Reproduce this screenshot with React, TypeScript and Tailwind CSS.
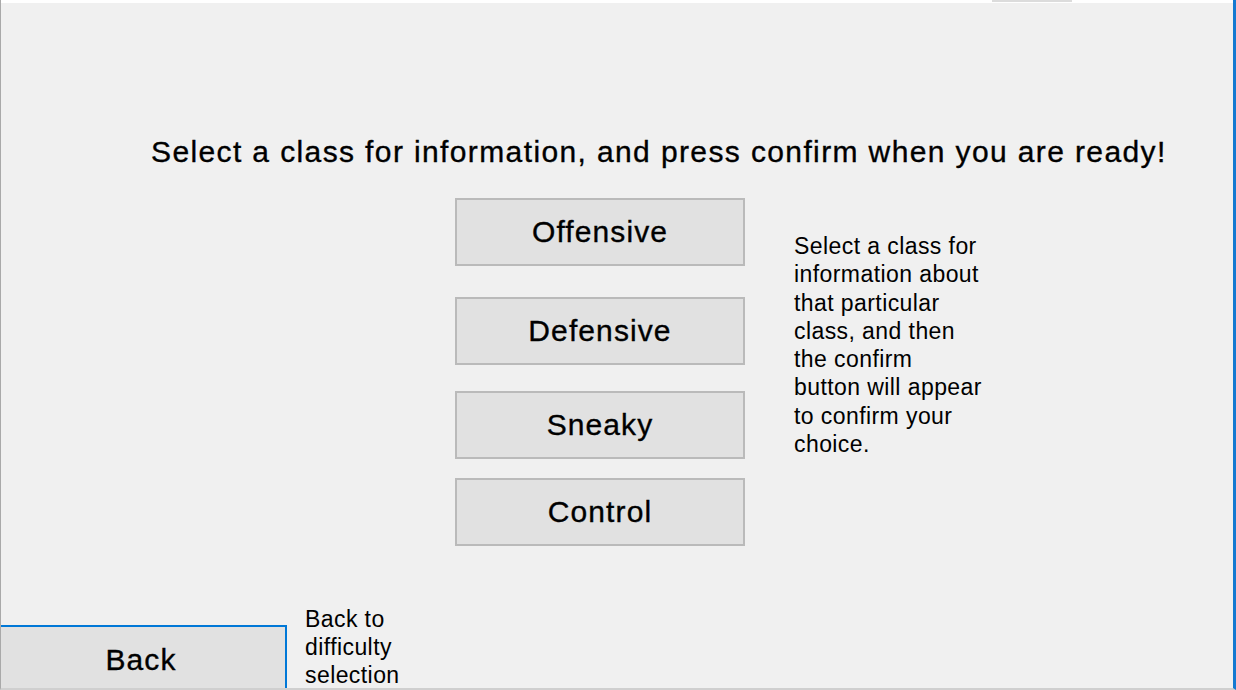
import React from "react";

const font = { fontFamily: '"Liberation Sans", Arial, sans-serif' };

function ClassButton({ label, className }: { label: string; className?: string }) {
  return (
    <button
      className={
        "w-[290px] h-[68px] bg-[#e1e1e1] border-2 border-[#bababa] flex items-center justify-center text-[30px] leading-none tracking-[1.1px] text-black [-webkit-text-stroke:0.35px_#000] " +
        (className ?? "")
      }
    >
      {label}
    </button>
  );
}

export default function App() {
  return (
    <div
      className="w-[1236px] h-[690px] bg-[#f0f0f0] flex flex-col border-l border-l-[#a9a9a9] border-r-[3px] border-r-[#1479d1] border-b-2 border-b-[#cfcfcf] overflow-hidden"
      style={font}
    >
      {/* top strip */}
      <div className="h-[3px] bg-white flex shrink-0">
        <div className="ml-[991px] w-[80px] h-[2px] bg-[#dcdcdc]" />
      </div>

      {/* heading */}
      <div className="mt-[133px] pl-[150px] text-[30px] leading-[32px] tracking-[1.38px] text-black whitespace-nowrap [-webkit-text-stroke:0.35px_#000]">
        Select a class for information, and press confirm when you are ready!
      </div>

      {/* middle */}
      <div className="mt-[30px] pl-[454px] flex items-start">
        <div className="flex flex-col">
          <ClassButton label="Offensive" />
          <ClassButton label="Defensive" className="mt-[31px]" />
          <ClassButton label="Sneaky" className="mt-[26px]" />
          <ClassButton label="Control" className="mt-[19px]" />
        </div>
        <div className="ml-[49px] mt-[34px] w-[189px] text-[23px] leading-[28.3px] tracking-[0.42px] text-black">
          Select a class for information about that particular class, and then the confirm button will appear to confirm your choice.
        </div>
      </div>

      <div className="flex-1" />

      {/* bottom */}
      <div className="flex items-end">
        <button className="w-[286px] h-[63px] pt-[4px] pr-[4px] bg-[#e1e1e1] border-t-2 border-r-2 border-[#0078d7] flex items-center justify-center text-[30px] leading-none tracking-[1.1px] text-black [-webkit-text-stroke:0.35px_#000]">
          Back
        </button>
        <div className="ml-[18px] mb-[-1px] w-[110px] text-[23px] leading-[28px] tracking-[0.42px] text-black">
          Back to difficulty selection
        </div>
      </div>
    </div>
  );
}
